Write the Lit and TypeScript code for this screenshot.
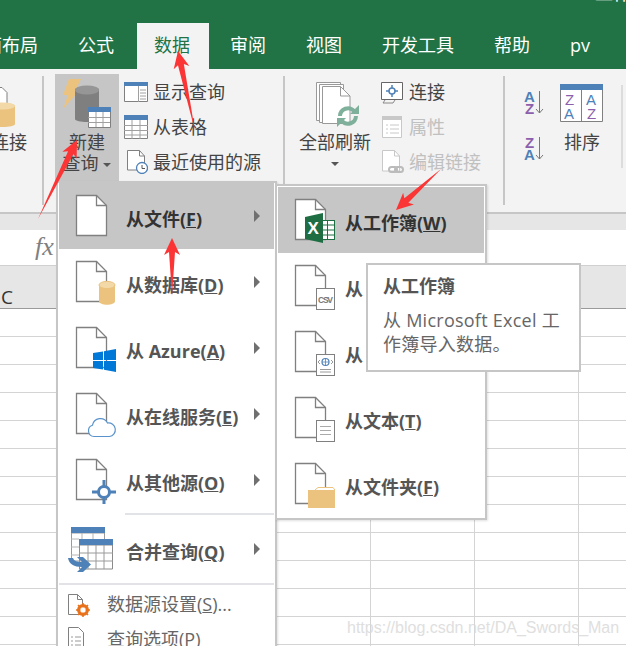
import { LitElement, css, html, svg } from 'lit';
import { customElement } from 'lit/decorators.js';

const BLUE = '#4e81b8';
const GOLD = '#ebc37f';

const doc = svg`
  <path d="M4.5 4.5h20l10 10v30h-30z" fill="#fff" stroke="#808080" stroke-width="1.3" />
  <path d="M24.5 4.5v10h10" fill="none" stroke="#808080" stroke-width="1.3" />
`;

const badges: Record<string, unknown> = {
  plain: svg``,
  db: svg`
    <path d="M27 28v16c0 5 16 5 16 0V28z" fill="${GOLD}" />
    <ellipse cx="35" cy="28" rx="8" ry="3.6" fill="#f3d9a8" stroke="${GOLD}" />
  `,
  azure: svg`
    <path
      d="M21 30l10-1.6V37H21zM32 28.300l12-2.300V37H32zM21 38h10v8.600L21 45zM32 38h12v11l-12-2.300z"
      fill="#0078d7"
    />
  `,
  cloud: svg`
    <path
      d="M22 47.500a5.800 5.800 0 0 1-1.500-11.300a8 8 0 0 1 15-2.200a6.800 6.800 0 0 1 2 13.500z"
      fill="#fff"
      stroke="#5a93cc"
      stroke-width="1.200"
    />
  `,
  target: svg`
    <circle cx="32" cy="37" r="5.500" fill="#fff" stroke="${BLUE}" stroke-width="3" />
    <path d="M32 25v6M32 43v6M20 37h6M38 37h6" stroke="${BLUE}" stroke-width="3" />
  `,
  excel: svg`
    <rect x="29.500" y="25.500" width="14" height="19" fill="#fff" stroke="#1f6e43" />
    <path d="M36.500 25v20M32 30h12M32 35h12M32 40h12" stroke="#1f6e43" stroke-width="1" />
    <path d="M14 22l18-4v30l-18-4z" fill="#1f6e43" />
    <text x="16.500" y="39" fill="#fff" font-family="Liberation Sans, sans-serif" font-weight="700" font-size="17">X</text>
  `,
  csv: svg`
    <rect x="25.500" y="27.500" width="18" height="21" fill="#fff" stroke="#808080" />
    <text x="27" y="42" fill="#777" font-family="Liberation Sans, sans-serif" font-size="8.500" textLength="15">CSV</text>
  `,
  web: svg`
    <rect x="25.500" y="27.500" width="18" height="21" fill="#fff" stroke="#808080" />
    <circle cx="34.500" cy="35" r="3.500" fill="none" stroke="${BLUE}" stroke-width="1.200" />
    <path d="M31 35h7M34.500 31.500v7" stroke="${BLUE}" stroke-width="0.800" />
    <path d="M29 33l-2 2l2 2M40 33l2 2l-2 2M29 42.500h11M29 45h11" fill="none" stroke="#808080" stroke-width="0.800" />
  `,
  text: svg`
    <rect x="25.500" y="27.500" width="18" height="21" fill="#fff" stroke="#808080" />
    <path d="M29 33.500h11M29 37.500h11M29 41.500h11" stroke="#aaa" />
  `,
  folder: svg`
    <path d="M24 31l3-2.500h15l2 2.500" fill="#fff" stroke="${GOLD}" />
    <path d="M17 31h27v18H17z" fill="${GOLD}" />
  `,
};

const menuIcon = (badge: string) => html`
  <svg class="menu-icon" viewBox="0 0 50 50">${doc}${badges[badge]}</svg>
`;

const mergeIcon = html`
  <svg class="menu-icon" viewBox="0 0 50 50">
    <path d="M-.5 6h33v28h-33z" fill="#fff" stroke="#9a9a9a" />
    <path d="M-1 0h34v6H-1z" fill="${BLUE}" />
    <path d="M10 6v6M21 6v6M-1 12h8M-1 20h8M-1 28h8" stroke="#b5b5b5" />
    <path d="M7.500 18h33v24h-33z" fill="#fff" stroke="#8a8a8a" />
    <path d="M7 12h34v6H7z" fill="${BLUE}" />
    <path d="M16 18v24M24 18v24M32 18v24M7 26h34M7 34h34" stroke="#9a9a9a" />
    <path d="M-4 31h5c1 3 4 4 9 4l-5-5h6l8 7.500l-8 7.500H5l5-5c-8 0-13-3-14-9z" fill="${BLUE}" />
  </svg>
`;

const MAIN_ITEMS = [
  { badge: 'plain', pre: '从文件(', key: 'F', active: true },
  { badge: 'db', pre: '从数据库(', key: 'D' },
  { badge: 'azure', pre: '从 Azure(', key: 'A' },
  { badge: 'cloud', pre: '从在线服务(', key: 'E' },
  { badge: 'target', pre: '从其他源(', key: 'O' },
];

const SUB_ITEMS = [
  { badge: 'excel', pre: '从工作簿(', key: 'W', active: true },
  { badge: 'csv', pre: '从 CSV(', key: 'C' },
  { badge: 'web', pre: '从 Web(', key: 'W' },
  { badge: 'text', pre: '从文本(', key: 'T' },
  { badge: 'folder', pre: '从文件夹(', key: 'F' },
];

const ARROWS = [
  { tip: [178, 51], tail: [195, 131] },
  { tip: [77, 140], tail: [38, 219] },
  { tip: [172, 238], tail: [172, 296] },
  { tip: [396, 210], tail: [441, 169] },
];

// tail is a point, the shaft widens towards a flared head
function arrowPoints(tip: number[], tail: number[]) {
  const dx = tail[0] - tip[0];
  const dy = tail[1] - tip[1];
  const len = Math.hypot(dx, dy);
  const ux = dx / len;
  const uy = dy / len;
  const at = (along: number, side: number) =>
    `${tip[0] + ux * along - uy * side},${tip[1] + uy * along + ux * side}`;
  return [at(0, 0), at(17, 8), at(14, 3), tail.join(','), at(14, -3), at(17, -8)].join(' ');
}

@customElement('app-root')
export class AppRoot extends LitElement {
  static styles = css`
    :host {
      display: block;
      position: relative;
      width: 626px;
      height: 646px;
      overflow: hidden;
      background: #fff;
      color: #444;
      font: 18px/22px 'Open Sans', 'Noto Sans CJK SC', sans-serif;
    }

    .title {
      height: 23px;
      overflow: hidden;
      padding-left: 595px;
      background: #217346;
      color: #fff;
      white-space: nowrap;
    }
    .title span {
      display: block;
      margin-top: -18px;
    }

    .tabs {
      display: flex;
      gap: 4px;
      height: 46px;
      margin-left: -51px;
      background: #217346;
      width: 677px;
      box-sizing: border-box;
    }
    .tab {
      padding: 0 19px 0 17px;
      color: #fff;
      line-height: 44px;
      white-space: nowrap;
    }
    .tab.active {
      background: #f3f3f3;
      color: #217346;
    }

    .ribbon {
      display: flex;
      height: 143px;
      padding-top: 5px;
      box-sizing: border-box;
      background: #f3f3f3;
    }
    .sep {
      flex: none;
      width: 2px;
      height: 129px;
      margin-top: 2px;
      background: #c6c6c6;
    }
    .group {
      flex: none;
      display: flex;
      box-sizing: border-box;
    }
    .large {
      flex: none;
      display: flex;
      flex-direction: column;
      align-items: center;
      height: 107px;
      line-height: 21px;
      white-space: nowrap;
    }
    .large svg {
      flex: none;
      display: block;
      height: 58px;
    }
    .pressed {
      background: #c6c6c6;
    }
    .caret {
      display: inline-block;
      margin-left: 4px;
      vertical-align: middle;
      border-style: solid;
      border-width: 4px 4px 0;
      border-color: #555 transparent transparent;
    }
    .stack {
      display: flex;
      flex-direction: column;
    }
    .small {
      display: flex;
      align-items: center;
      gap: 5px;
      height: 35px;
      white-space: nowrap;
    }
    .small svg {
      flex: none;
      width: 24px;
      height: 24px;
    }
    .small.off {
      color: #c0c0c0;
    }
    .sort-col {
      width: 22px;
    }
    .sort-col svg {
      display: block;
      width: 22px;
      height: 26px;
      margin-top: 16px;
    }
    .sort-col svg + svg {
      margin-top: 20px;
    }
    .sort-main {
      width: 44px;
      margin-left: 14px;
    }
    .sort-main svg {
      width: 44px;
    }
    .faint-sep {
      flex: none;
      width: 2px;
      height: 83px;
      margin: 11px 0 0 17px;
      background: #dcdcdc;
    }
    .group-label {
      margin: 7px 0 0 112px;
      white-space: nowrap;
    }

    .band {
      height: 18px;
      box-sizing: border-box;
      border-top: 2px solid #c6c6c6;
      background: #e6e6e6;
    }
    .fbar {
      height: 36px;
      box-sizing: border-box;
      padding-left: 35px;
      border-bottom: 1px solid #d0d0d0;
      color: #808080;
      font: italic 400 26px/33px 'Liberation Serif', serif;
    }
    .colhead {
      height: 43px;
      box-sizing: border-box;
      padding: 20px 0 0 1px;
      border-bottom: 1px solid #9a9a9a;
      background: #e6e6e6;
      color: #333;
      font-size: 19px;
    }
    .cells {
      display: flex;
      height: 338px;
      background: repeating-linear-gradient(to bottom, #fff 0 27px, #d4d4d4 27px 28px);
    }
    .col {
      flex: none;
      box-sizing: border-box;
      width: 104px;
      border-right: 1px solid #d4d4d4;
    }
    .col.first {
      width: 371px;
    }

    .menu {
      position: absolute;
      box-sizing: border-box;
      background: #fff;
      border: 2px solid #c6c6c6;
      box-shadow: 1px 1px 2px rgba(0, 0, 0, 0.12);
    }
    .menu.main {
      left: 56px;
      top: 181px;
      width: 221px;
      height: 480px;
      padding: 0 1px;
    }
    .menu.sub {
      left: 275px;
      top: 184px;
      width: 212px;
      height: 336px;
      padding: 1px;
    }
    .row {
      display: flex;
      align-items: center;
      gap: 4px;
      height: 66px;
      padding: 0 14px 0 13px;
      box-sizing: border-box;
      color: #555;
      font-weight: 700;
      white-space: nowrap;
    }
    .row.active {
      background: #c6c6c6;
      color: #333;
    }
    .row.merge {
      height: 68px;
      padding-top: 6px;
    }
    .row.merge .chevron {
      margin-top: -6px;
    }
    .label {
      margin-top: 6px;
    }
    .row.merge .label {
      margin-top: 0;
    }
    .menu-icon {
      flex: none;
      width: 50px;
      height: 50px;
      overflow: visible;
    }
    .chevron {
      margin-left: auto;
      border-style: solid;
      border-width: 6px 0 6px 6px;
      border-color: transparent transparent transparent #707070;
    }
    .divider {
      height: 2px;
      background: #e1e3e6;
    }
    .divider.inset {
      margin-left: 66px;
    }
    .divider + .plain {
      margin-top: 1px;
    }
    .plain {
      display: flex;
      align-items: center;
      gap: 23px;
      height: 35px;
      padding-left: 9px;
      color: #666;
      white-space: nowrap;
    }
    .plain svg {
      flex: none;
      width: 16px;
      height: 24px;
      overflow: visible;
    }

    .tooltip {
      position: absolute;
      left: 366px;
      top: 263px;
      width: 215px;
      height: 109px;
      box-sizing: border-box;
      padding: 9px 15px;
      border: 2px solid #c6c6c6;
      background: #fff;
      color: #666;
      line-height: 24px;
    }
    .tooltip b {
      display: block;
      margin-bottom: 10px;
      color: #555;
    }
    .tooltip div {
      letter-spacing: 0.25px;
    }

    .watermark {
      position: absolute;
      left: 347px;
      top: 618px;
      color: #dadada;
      opacity: 0.85;
      font: 16px/20px 'Liberation Sans', sans-serif;
      white-space: nowrap;
    }
    .arrows {
      position: absolute;
      left: 0;
      top: 0;
      width: 626px;
      height: 646px;
      pointer-events: none;
    }
  `;

  private renderTabs() {
    const tabs = ['页面布局', '公式', '数据', '审阅', '视图', '开发工具', '帮助', 'pv'];
    return html`
      <div class="tabs">
        ${tabs.map((t) => html`<div class="tab ${t === '数据' ? 'active' : ''}">${t}</div>`)}
      </div>
    `;
  }

  private renderRibbon() {
    return html`
      <div class="ribbon">
        <div class="group" style="width:42px">
          <div class="large" style="width:36px;margin-left:-9px">
            <svg width="36" viewBox="0 0 36 58">
              <path d="M0 13.500h11l5 5v18H0z" fill="#fff" stroke="#808080" />
              <path d="M0 32c0-4 24-4 24 0v18c0 4-24 4-24 0z" fill="${GOLD}" />
              <ellipse cx="12" cy="32" rx="12" ry="3.500" fill="#f3d9a8" />
            </svg>
            <span>连接</span>
          </div>
        </div>
        <div class="sep"></div>

        <div class="group" style="width:239px;padding-left:11px">
          <div class="large pressed" style="width:64px">
            <svg width="64" viewBox="0 0 64 58">
              <path d="M14 5h12l-6 12h4L8 35l5-14H8z" fill="${GOLD}" />
              <path d="M20 16c0-5 24-5 24 0v29c0 4-24 4-24 0z" fill="#7f7f7f" />
              <ellipse cx="32" cy="16" rx="12" ry="4.500" fill="#969696" />
              <path d="M33.500 33.500h22v20h-22z" fill="#fff" stroke="#808080" />
              <path d="M33 33h23v5H33z" fill="${BLUE}" />
              <path d="M41 38v15M48 38v15M33 43.500h22M33 48.500h22" stroke="#a0a0a0" />
            </svg>
            <span>新建</span>
            <span style="margin-left:-1px">查询<i class="caret"></i></span>
          </div>
          <div class="stack" style="margin-left:5px">
            <div class="small">
              <svg viewBox="0 0 24 24">
                <path d="M.5 2.500h23v19H.5z" fill="#fff" stroke="#808080" />
                <path d="M0 2h24v4H0z" fill="${BLUE}" />
                <path d="M16 10h6M16 13h6M16 16h6M16 19h6" stroke="#a0a0a0" />
                <path d="M14.500 6v16" stroke="#a0a0a0" />
              </svg>
              <span>显示查询</span>
            </div>
            <div class="small">
              <svg viewBox="0 0 24 24">
                <path d="M.5.500h23v23H.5z" fill="#fff" stroke="#808080" />
                <path d="M0 0h24v5H0z" fill="${BLUE}" />
                <path d="M8 5v19M16 5v19M0 10.500h24M0 15.500h24M0 20h24" stroke="#a0a0a0" />
              </svg>
              <span>从表格</span>
            </div>
            <div class="small">
              <svg viewBox="0 0 24 24">
                <path d="M3.500.500h12l5 5.500v14h-17z" fill="#fff" stroke="#808080" />
                <path d="M15.500.500v5.500h5" fill="none" stroke="#808080" />
                <circle cx="18" cy="18" r="5.500" fill="#fff" stroke="${BLUE}" stroke-width="1.300" />
                <path d="M18 15v3.500h3" fill="none" stroke="#555" />
              </svg>
              <span>最近使用的源</span>
            </div>
          </div>
        </div>
        <div class="sep"></div>

        <div class="group" style="width:218px;padding-left:14px">
          <div class="large" style="width:72px">
            <svg width="72" viewBox="0 0 72 58">
              <path d="M17.500 8.500h24v38h-24z" fill="#fff" stroke="#999" />
              <path d="M20.500 10.500h24v38h-24z" fill="#fff" stroke="#999" />
              <path d="M23.500 12.500h18l9.500 9.500v27.500H23.500z" fill="#fff" stroke="#999" />
              <path d="M41.500 12.500v9.500H51" fill="none" stroke="#999" />
              <path d="M41 42a8 8 0 0 1 14-5" fill="none" stroke="#7fb09b" stroke-width="4" />
              <path d="M60 31v9h-9z" fill="#7fb09b" />
              <path d="M57 42a8 8 0 0 1-14 5" fill="none" stroke="#7fb09b" stroke-width="4" />
              <path d="M38 53v-9h9z" fill="#7fb09b" />
            </svg>
            <span>全部刷新</span>
            <i class="caret" style="margin:9px 0 0"></i>
          </div>
          <div class="stack" style="margin-left:9px">
            <div class="small">
              <svg viewBox="0 0 24 24">
                <path d="M1.500 2.500h21v17h-21z" fill="#fff" stroke="#666" />
                <path d="M5 20l-2 3h10l2-3" fill="none" stroke="#888" />
                <circle cx="12" cy="11" r="3" fill="#fff" stroke="${BLUE}" stroke-width="1.500" />
                <path d="M12 5v3M12 14v3M6 11h3M15 11h3" stroke="${BLUE}" stroke-width="1.500" />
              </svg>
              <span>连接</span>
            </div>
            <div class="small off">
              <svg viewBox="0 0 24 24">
                <path d="M2.500 1.500h19v21h-19z" fill="#fff" stroke="#c8c8c8" />
                <path d="M2 1h20v4H2z" fill="#c8c8c8" />
                <path d="M6 10h2M10 10h9M6 14h2M10 14h9M6 18h2M10 18h9" stroke="#c8c8c8" />
              </svg>
              <span>属性</span>
            </div>
            <div class="small off">
              <svg viewBox="0 0 24 24">
                <path d="M2.500.500h12l5 5.500v15h-17z" fill="#fff" stroke="#c8c8c8" />
                <path d="M14.500.500v5.500h5" fill="none" stroke="#c8c8c8" />
                <rect x="9" y="17" width="8" height="5" rx="2.500" fill="none" stroke="#bbb" stroke-width="2" />
                <rect x="15" y="17" width="8" height="5" rx="2.500" fill="none" stroke="#bbb" stroke-width="2" />
              </svg>
              <span>编辑链接</span>
            </div>
          </div>
        </div>
        <div class="sep"></div>

        <div class="group" style="width:140px;padding-left:19px;flex-direction:column">
          <div style="display:flex;height:105px">
            <div class="sort-col">
              <svg viewBox="0 0 22 26">
                <text x="0" y="12" fill="${BLUE}" font-family="Liberation Sans, sans-serif" font-weight="700" font-size="15">A</text>
                <text x="1" y="24" fill="#8c5fad" font-family="Liberation Sans, sans-serif" font-weight="700" font-size="15">Z</text>
                <path d="M15.500 1v22M12 19l3.500 4l3.500-4" fill="none" stroke="#777" />
              </svg>
              <svg viewBox="0 0 22 26">
                <text x="1" y="12" fill="#8c5fad" font-family="Liberation Sans, sans-serif" font-weight="700" font-size="15">Z</text>
                <text x="0" y="24" fill="${BLUE}" font-family="Liberation Sans, sans-serif" font-weight="700" font-size="15">A</text>
                <path d="M15.500 1v22M12 19l3.500 4l3.500-4" fill="none" stroke="#777" />
              </svg>
            </div>
            <div class="large sort-main">
              <svg viewBox="0 0 44 58">
                <path d="M.5 10.500h42v37H.5z" fill="#fff" stroke="#808080" />
                <path d="M0 10h43v6H0z" fill="${BLUE}" />
                <path d="M21.500 16v31" stroke="#808080" />
                <text x="5" y="31" fill="#8c5fad" font-family="Liberation Sans, sans-serif" font-size="15">Z</text>
                <text x="4" y="45" fill="${BLUE}" font-family="Liberation Sans, sans-serif" font-size="15">A</text>
                <text x="26" y="31" fill="${BLUE}" font-family="Liberation Sans, sans-serif" font-size="15">A</text>
                <text x="27" y="45" fill="#8c5fad" font-family="Liberation Sans, sans-serif" font-size="15">Z</text>
              </svg>
              <span>排序</span>
            </div>
            <div class="faint-sep"></div>
          </div>
          <div class="group-label">排序和筛选</div>
        </div>
      </div>
    `;
  }

  private renderMainMenu() {
    return html`
      <div class="menu main">
        ${MAIN_ITEMS.map(
          (item) => html`
            <div class="row ${item.active ? 'active' : ''}">
              ${menuIcon(item.badge)}
              <span class="label">${item.pre}<u>${item.key}</u>)</span>
              <i class="chevron"></i>
            </div>
          `
        )}
        <div class="divider inset"></div>
        <div class="row merge">
          ${mergeIcon}
          <span class="label">合并查询(<u>Q</u>)</span>
          <i class="chevron"></i>
        </div>
        <div class="divider"></div>
        <div class="plain">
          <svg viewBox="0 0 16 24">
            <path d="M.5 2.500h9l5 5v15H.5z" fill="#fff" stroke="#808080" />
            <path d="M9.500 2.500v5h5" fill="none" stroke="#808080" />
            <circle cx="15" cy="18" r="4.500" fill="#fff" stroke="#e8731c" stroke-width="3" />
            <path d="M15 11v14M8 18h14M10 13l10 10M20 13l-10 10" stroke="#e8731c" stroke-width="1.500" />
            <circle cx="15" cy="18" r="2.500" fill="#fff" />
          </svg>
          <span>数据源设置(<u>S</u>)...</span>
        </div>
        <div class="plain">
          <svg viewBox="0 0 16 24">
            <path d="M.5.500h10l5 5v20H.5z" fill="#fff" stroke="#808080" />
            <path d="M3 10h2M7 10h6M3 14h2M7 14h6M3 18h2M7 18h6" stroke="#999" />
          </svg>
          <span>查询选项(P)</span>
        </div>
      </div>
    `;
  }

  private renderSubMenu() {
    return html`
      <div class="menu sub">
        ${SUB_ITEMS.map(
          (item) => html`
            <div class="row ${item.active ? 'active' : ''}">
              ${menuIcon(item.badge)}
              <span class="label">${item.pre}<u>${item.key}</u>)</span>
            </div>
          `
        )}
      </div>
    `;
  }

  render() {
    return html`
      <div class="title"><span>工作簿1</span></div>
      ${this.renderTabs()} ${this.renderRibbon()}
      <div class="band"></div>
      <div class="fbar">fx</div>
      <div class="colhead">C</div>
      <div class="cells">
        <div class="col first"></div>
        <div class="col"></div>
        <div class="col"></div>
      </div>

      ${this.renderMainMenu()} ${this.renderSubMenu()}

      <div class="tooltip">
        <b>从工作簿</b>
        <div>从 Microsoft Excel 工作簿导入数据。</div>
      </div>

      <div class="watermark">https://blog.csdn.net/DA_Swords_Man</div>

      <svg class="arrows" viewBox="0 0 626 646">
        ${ARROWS.map(
          (a) => svg`<polygon points="${arrowPoints(a.tip, a.tail)}" fill="#fb3535" />`
        )}
      </svg>
    `;
  }
}
